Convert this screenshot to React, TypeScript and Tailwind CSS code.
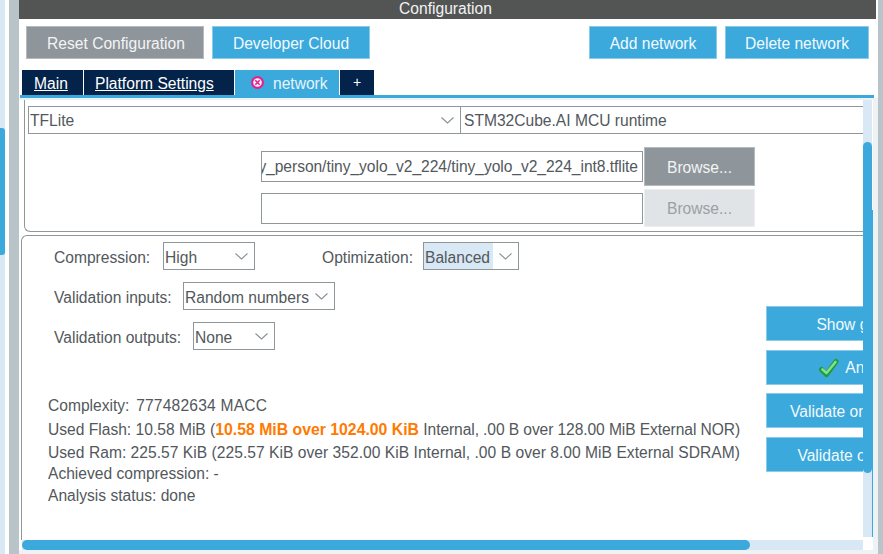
const blueBtn = "border border-[#8ccbe8] bg-[#3ba9dc] pt-[2px] text-[#f2f9fd]";

function Chevron() {
  return (
    <svg width="13" height="7" viewBox="0 0 13 7" className="shrink-0">
      <polyline points="0.5,0.5 6.5,6 12.5,0.5" fill="none" stroke="#8a9094" strokeWidth="1.1" />
    </svg>
  );
}

function Select({ value, width, highlight }: { value: string; width: string; highlight?: boolean }) {
  return (
    <div className={`flex h-[28px] shrink-0 items-center justify-between border border-[#8f979b] pr-[6px] ${width}`}>
      <span className={`flex h-[26px] items-center pt-[4px] pl-px ${highlight ? "w-[69px] bg-[#d8e8f5]" : ""}`}>{value}</span>
      <Chevron />
    </div>
  );
}

function CloseIcon() {
  return (
    <svg width="13" height="13" viewBox="0 0 13 13" className="shrink-0">
      <circle cx="6.5" cy="6.5" r="6.5" fill="#e2238f" />
      <circle cx="6.5" cy="6.5" r="4.3" fill="#fdf1f8" />
      <path d="M4.3 4.3 L8.7 8.7 M8.7 4.3 L4.3 8.7" stroke="#e2238f" strokeWidth="1.6" />
    </svg>
  );
}

function CheckIcon() {
  return (
    <svg width="20" height="20" viewBox="0 0 20 20" className="shrink-0">
      <polyline points="2.5,11.5 7.5,16.5 17,3.5" fill="none" stroke="#1c9c3c" strokeWidth="5" strokeLinejoin="round" strokeLinecap="round" />
      <polyline points="3.5,11.5 7.5,15 16.5,4" fill="none" stroke="#86de8a" strokeWidth="2.6" strokeLinejoin="round" strokeLinecap="round" />
    </svg>
  );
}

export default function App() {
  return (
    <div className="flex h-[554px] w-[883px] overflow-hidden bg-white text-[15.6px] text-[#52585c] [font-family:'Liberation_Sans',Arial,sans-serif]">
      {/* outer scrollbar */}
      <div className="h-full w-[5px] bg-[#d8e8f5]">
        <div className="mt-[128px] h-[127px] rounded-r-[3px] bg-[#3ba9dc]" />
      </div>
      <div className="w-[4px]" />
      <div className="w-[10px] bg-[#b9c4c9]" />

      <div className="flex w-[857px] flex-col">
        <div className="flex h-[19px] items-center justify-center bg-[#535554] pb-[2px] pr-[4px] text-[#f2f2f2]">Configuration</div>

        {/* Toolbar */}
        <div className="mt-[7px] flex h-[33px] justify-between pl-[7px] pr-[7px]">
          <div className="flex gap-2">
            <button className="w-[178px] border border-[#b5babd] bg-[#8f969b] pl-[2px] pt-[2px] text-[#f2f4f5]">Reset Configuration</button>
            <button className={`w-[158px] ${blueBtn}`}>Developer Cloud</button>
          </div>
          <div className="flex gap-2">
            <button className={`w-[128px] ${blueBtn}`}>Add network</button>
            <button className={`w-[144px] ${blueBtn}`}>Delete network</button>
          </div>
        </div>

        {/* Tabs */}
        <div className="mt-[11px] flex h-[25px] gap-px pl-[3px] text-white">
          <div className="flex w-[61px] items-center bg-[#03234b] pl-[12px] pt-[2px] underline">Main</div>
          <div className="flex w-[150px] items-center bg-[#03234b] pl-[11px] pt-[2px] underline">Platform Settings</div>
          <div className="flex w-[104px] items-center gap-[9px] bg-[#3ba9dc] pl-[16px] text-[#e6f4fb]">
            <CloseIcon />
            <span className="pt-[2px]">network</span>
          </div>
          <div className="flex w-[34px] items-center justify-center bg-[#03234b] text-[14px]">+</div>
        </div>
        <div className="ml-px h-[3px] w-[854px] bg-[#3ba9dc]" />

        <div className="flex min-h-0 flex-1 flex-col bg-[#eff2f4] pt-[2px]">
          <div className="flex h-[440px]">
            <div className="w-[844px] overflow-hidden bg-white">
              {/* Framework panel */}
              <div className="ml-[5px] h-[132px] w-[900px] rounded-bl-[6px] border-b border-l border-[#8f979b] pl-[3px] pt-[6px]">
                <div className="flex h-[28px]">
                  <div className="flex w-[433px] items-center justify-between border border-[#8f979b] pl-px pr-[6px]">
                    <span className="pt-[2px]">TFLite</span>
                    <Chevron />
                  </div>
                  <div className="flex w-[440px] items-center border border-l-0 border-[#8f979b] pl-[3px] pt-[2px]">STM32Cube.AI MCU runtime</div>
                </div>
                <div className="ml-[233px] mt-[13px] flex h-[39px] items-center gap-px">
                  <div className="flex h-[31px] w-[382px] items-center justify-end overflow-hidden whitespace-nowrap border border-[#8f979b] pr-[4px] pt-[1px] tracking-[-0.05px]">
                    y_person/tiny_yolo_v2_224/tiny_yolo_v2_224_int8.tflite
                  </div>
                  <button className="h-[39px] w-[111px] border border-[#b5babd] bg-[#8f969b] pt-[2px] text-[#f2f4f5]">Browse...</button>
                </div>
                <div className="ml-[233px] mt-[3px] flex h-[38px] items-center gap-px">
                  <div className="h-[31px] w-[382px] border border-[#8f979b]" />
                  <button className="h-[38px] w-[111px] border border-[#eceef0] bg-[#e1e4e7] pt-[2px] text-[#9aa0a4]">Browse...</button>
                </div>
              </div>

              {/* Analysis panel */}
              <div className="ml-[2px] mt-[3px] flex h-[305px] w-[1000px] rounded-tl-[6px] border-l border-t border-[#8f979b]">
                <div className="w-[744px] shrink-0 pl-[32px] pt-[6px]">
                  <div className="flex h-[28px] items-center">
                    <span className="w-[109px] pt-[4px]">Compression:</span>
                    <Select value="High" width="w-[92px]" />
                    <span className="ml-[67px] w-[101px] pt-[4px]">Optimization:</span>
                    <Select value="Balanced" width="w-[96px]" highlight />
                  </div>
                  <div className="mt-[12px] flex h-[28px] items-center">
                    <span className="w-[129px] pt-[4px]">Validation inputs:</span>
                    <Select value="Random numbers" width="w-[152px]" />
                  </div>
                  <div className="mt-[12px] flex h-[28px] items-center">
                    <span className="w-[139px] pt-[4px]">Validation outputs:</span>
                    <Select value="None" width="w-[82px]" />
                  </div>

                  <div className="-ml-[6px] mt-[44px] whitespace-nowrap">
                    <div className="h-[24px] leading-[24px]">
                      Complexity:&nbsp; <span className="-ml-[2px] tracking-[0.2px]">777482634 MACC</span>
                    </div>
                    <div className="h-[23px] leading-[23px]">
                      Used Flash: 10.58 MiB (<b className="text-[15.8px] text-[#ff7a00]">10.58 MiB over 1024.00 KiB</b>{" "}
                      <span className="tracking-[-0.09px]">Internal, .00 B over 128.00 MiB External NOR)</span>
                    </div>
                    <div className="h-[22px] pt-[1px] leading-[22px] tracking-[0.03px]">Used Ram: 225.57 KiB (225.57 KiB over 352.00 KiB Internal, .00 B over 8.00 MiB External SDRAM)</div>
                    <div className="h-[22px] leading-[22px]">Achieved compression: -</div>
                    <div className="h-[22px] leading-[22px]">Analysis status: done</div>
                  </div>
                </div>

                <div className="mt-[70px] flex w-[184px] shrink-0 flex-col gap-[8.7px]">
                  <button className={`h-[35px] ${blueBtn}`}>Show graph</button>
                  <button className={`flex h-[35px] items-center justify-center gap-[6px] pl-[4px] ${blueBtn}`}>
                    <CheckIcon />
                    Analyze
                  </button>
                  <button className={`h-[35px] ${blueBtn}`}>Validate on desktop</button>
                  <button className={`h-[35px] ${blueBtn}`}>Validate on target</button>
                </div>
              </div>
            </div>

            {/* vertical scrollbar */}
            <div className="h-full w-[10px] bg-white">
              <div className="flex h-[437px]">
                <div className="h-full w-[9px] bg-[#d8e8f5]">
                  <div className="mt-[42px] h-[331px] rounded-[5px] bg-[#3ba9dc]" />
                </div>
                <div className="mt-[110px] h-[327px] w-px bg-[#3ba9dc]" />
              </div>
            </div>
          </div>

          {/* horizontal scrollbar */}
          <div className="flex h-[10px] w-[854px] bg-white pl-[3px]">
            <div className="h-full w-[841px] bg-[#d8e8f5]">
              <div className="h-full w-[728px] rounded-[5px] bg-[#3ba9dc]" />
            </div>
          </div>
        </div>
      </div>

      <div className="flex w-[2px] flex-col">
        <div className="h-[98px] bg-white" />
        <div className="flex-1 bg-[#eff2f4]" />
      </div>
      <div className="w-[5px] bg-[#b9c4c9]" />
    </div>
  );
}
